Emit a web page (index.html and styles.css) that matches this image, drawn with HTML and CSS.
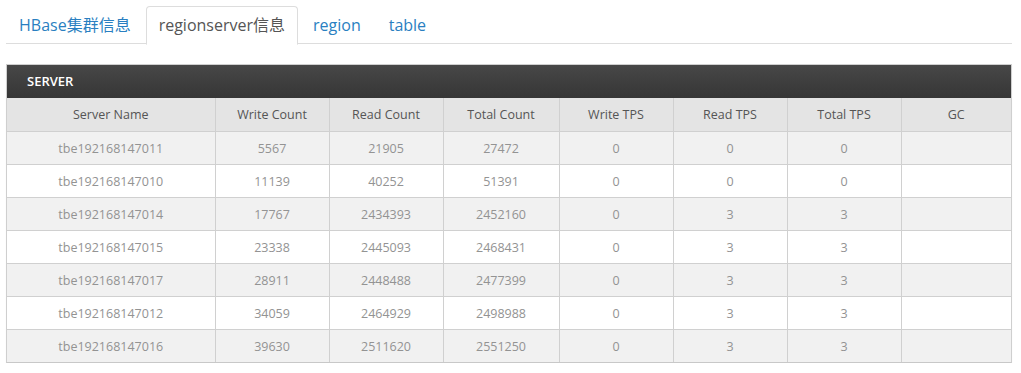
FILE: index.html
```html
<!DOCTYPE html>
<html>
<head>
<meta charset="utf-8">
<link rel="stylesheet" href="styles.css">
</head>
<body>
<div class="page">
  <ul class="tabs">
    <li class="tab"><a>HBase集群信息</a></li>
    <li class="tab active"><a>regionserver信息</a></li>
    <li class="tab"><a>region</a></li>
    <li class="tab"><a>table</a></li>
  </ul>
  <div class="box">
    <div class="box-head">SERVER</div>
    <table class="grid">
      <colgroup>
        <col class="c1"><col class="c2"><col class="c3"><col class="c4"><col class="c5"><col class="c6"><col class="c7"><col class="c8">
      </colgroup>
      <thead>
        <tr><th>Server Name</th><th>Write Count</th><th>Read Count</th><th>Total Count</th><th>Write TPS</th><th>Read TPS</th><th>Total TPS</th><th>GC</th></tr>
      </thead>
      <tbody>
        <tr><td>tbe192168147011</td><td>5567</td><td>21905</td><td>27472</td><td>0</td><td>0</td><td>0</td><td></td></tr>
        <tr><td>tbe192168147010</td><td>11139</td><td>40252</td><td>51391</td><td>0</td><td>0</td><td>0</td><td></td></tr>
        <tr><td>tbe192168147014</td><td>17767</td><td>2434393</td><td>2452160</td><td>0</td><td>3</td><td>3</td><td></td></tr>
        <tr><td>tbe192168147015</td><td>23338</td><td>2445093</td><td>2468431</td><td>0</td><td>3</td><td>3</td><td></td></tr>
        <tr><td>tbe192168147017</td><td>28911</td><td>2448488</td><td>2477399</td><td>0</td><td>3</td><td>3</td><td></td></tr>
        <tr><td>tbe192168147012</td><td>34059</td><td>2464929</td><td>2498988</td><td>0</td><td>3</td><td>3</td><td></td></tr>
        <tr><td>tbe192168147016</td><td>39630</td><td>2511620</td><td>2551250</td><td>0</td><td>3</td><td>3</td><td></td></tr>
      </tbody>
    </table>
  </div>
</div>
</body>
</html>
```

FILE: styles.css
```css
html, body {
  margin: 0;
  padding: 0;
  background: #fff;
}
.page {
  padding: 6px 9px 0 6px;
  font-family: "Open Sans", "Noto Sans CJK SC", sans-serif;
}
.tabs {
  list-style: none;
  margin: 0;
  padding: 0;
  display: flex;
  border-bottom: 1px solid #dddddd;
  height: 37px;
}
.tab {
  margin-right: 2px;
  margin-bottom: -1px;
}
.tab a {
  display: block;
  padding: 0 12px;
  height: 36px;
  line-height: 36px;
  font-size: 16px;
  color: #2a7fc1;
  border: 1px solid transparent;
  border-radius: 4px 4px 0 0;
}
.tab.active a {
  color: #555555;
  background: #ffffff;
  border-color: #dddddd #dddddd transparent #dddddd;
  height: 37px;
}
.box {
  margin-top: 20px;
  border: 1px solid #cfcfcf;
  border-bottom-color: #c8c8c8;
  box-shadow: 0 1px 1px rgba(0,0,0,0.06);
}
.box-head {
  height: 33px;
  line-height: 33px;
  padding-left: 20px;
  color: #ffffff;
  font-size: 13px;
  font-weight: 600;
  background: linear-gradient(#474747, #363636);
}
.grid {
  width: 100%;
  border-collapse: collapse;
  table-layout: fixed;
  font-size: 12.5px;
}
.c1 { width: 208px; }
.c2 { width: 114px; }
.c3 { width: 114px; }
.c4 { width: 116px; }
.c5 { width: 114px; }
.c6 { width: 114px; }
.c7 { width: 114px; }
.grid th, .grid td {
  height: 32px;
  padding: 0;
  text-align: center;
  border-left: 1px solid #d0d0d0;
  border-top: 1px solid #d0d0d0;
}
.grid th:first-child, .grid td:first-child {
  border-left: none;
}
.grid thead th {
  border-top: none;
  height: 33px;
  background: #e4e4e4;
  color: #555555;
  font-weight: normal;
}
.grid td {
  color: #939393;
}
.grid tbody tr:nth-child(odd) td {
  background: #f1f1f1;
}
.grid tbody tr:nth-child(even) td {
  background: #ffffff;
}
```
